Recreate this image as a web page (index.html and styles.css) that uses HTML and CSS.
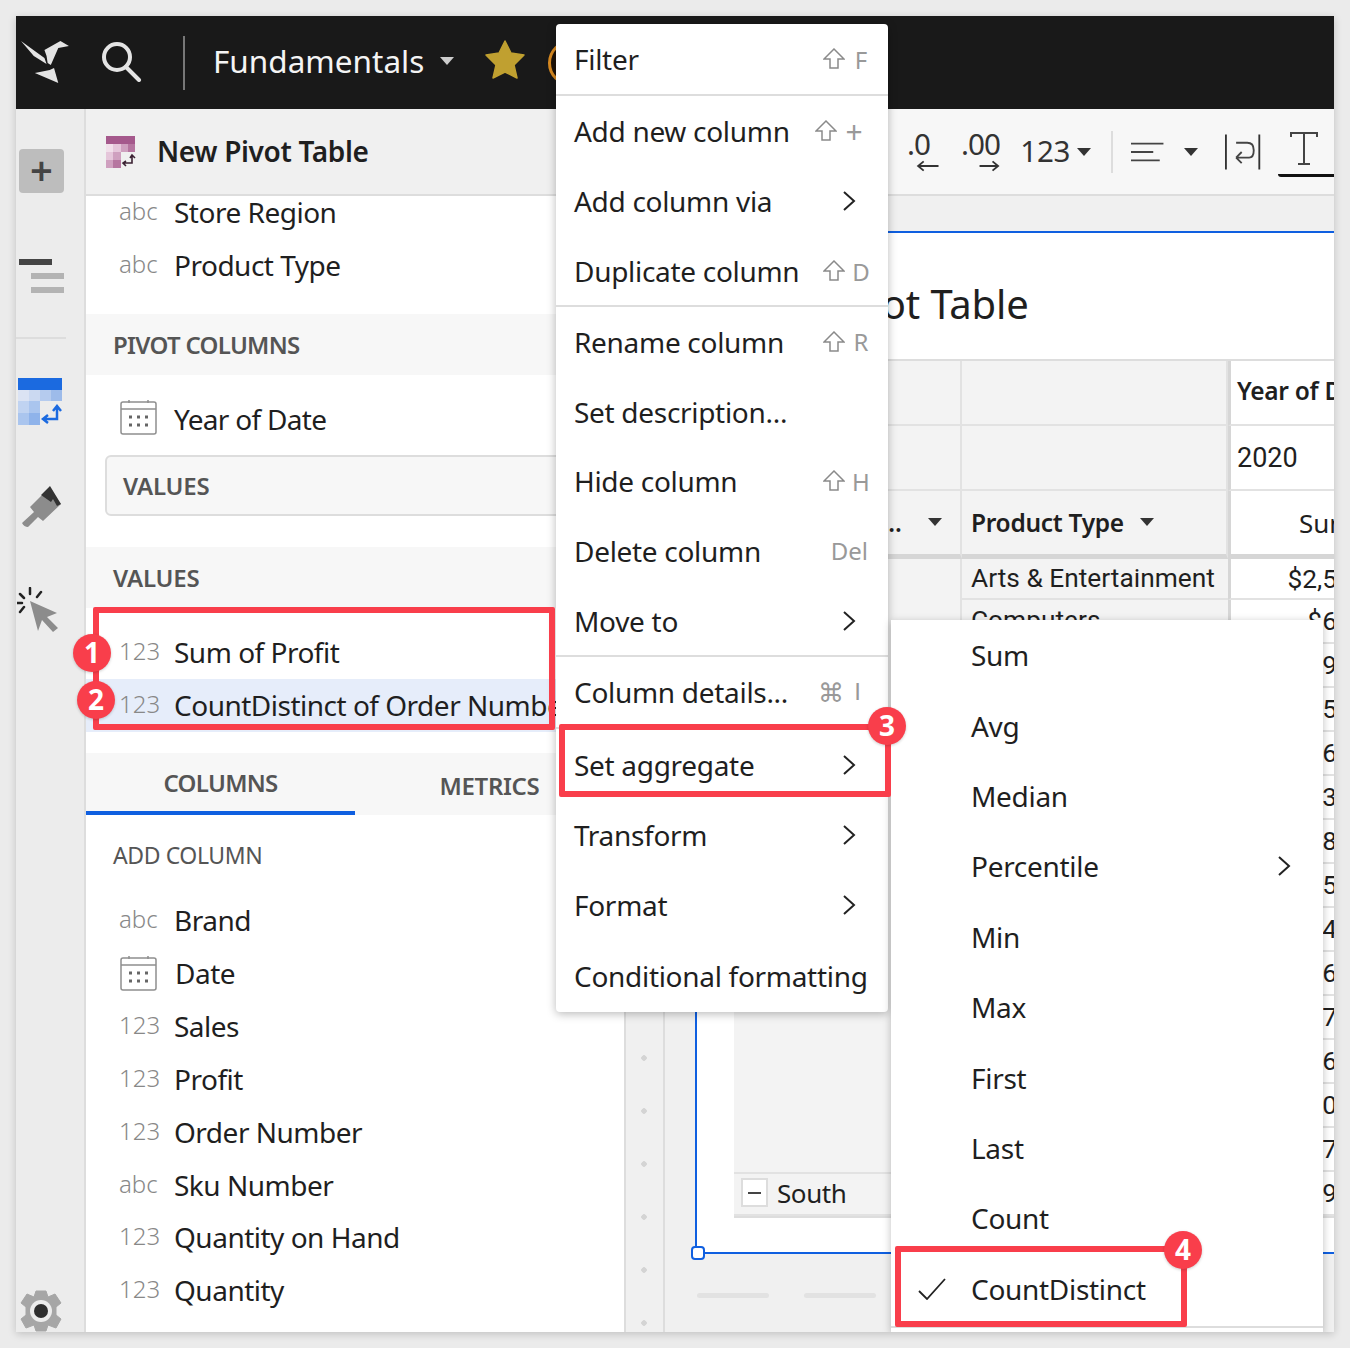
FILE: index.html
```html
<!DOCTYPE html>
<html>
<head>
	<meta charset="utf-8">
	<title>Fundamentals</title>
	<link rel="stylesheet" href="styles.css">
</head>
<body>
<div class="app">
	<header class="topbar">
		<svg class="logo" width="49" height="44" viewBox="0 0 46 44" preserveAspectRatio="none"><path d="M0 1 L22 18 L24 24 L12 16Z M22 10 L37 1 L45 6 L35 8 L28 25 L25 23 L24 16Z M13 33 L27 30 L31 28 L35 43Z" fill="#e4e4e4"/></svg>
		<svg class="search" width="42" height="42" viewBox="0 0 42 42"><circle cx="17" cy="17" r="13" fill="none" stroke="#e4e4e4" stroke-width="4"/><path d="M26 27 L39 40" stroke="#e4e4e4" stroke-width="4" stroke-linecap="round"/></svg>
		<div class="topbar-sep"></div>
		<div class="wb-name">Fundamentals</div>
		<div class="caret caret-light"></div>
		<svg class="star" width="42" height="42" viewBox="0 0 42 42"><path d="M21 2 L27 14 L40 16 L30 26 L33 39 L21 33 L9 39 L12 26 L2 16 L15 14Z" fill="#c0a030" stroke="#c0a030" stroke-linejoin="round" stroke-width="1.5"/></svg>
		<div class="avatar"></div>
	</header>

	<div class="main">
		<nav class="rail">
			<div class="rail-add">+</div>
			<div class="rail-list"><span class="bar-dark"></span><span class="bar-light"></span><span class="bar-light"></span></div>
			<div class="rail-sep"></div>
			<svg class="rail-pivot" width="48" height="47" viewBox="0 0 48 47">
				<rect width="44" height="12" x="1" y="0" fill="#1b6ae0"/>
				<rect x="1" y="12" width="11" height="11" fill="#dbe3f3"/><rect x="12" y="12" width="11" height="11" fill="#cbd9f1"/><rect x="23" y="12" width="11" height="11" fill="#b5cbee"/><rect x="34" y="12" width="11" height="11" fill="#9dbbea"/>
				<rect x="1" y="23" width="11" height="12" fill="#c0d3f1"/><rect x="12" y="23" width="11" height="12" fill="#aac5ee"/>
				<rect x="1" y="35" width="11" height="12" fill="#aac5ee"/><rect x="12" y="35" width="11" height="12" fill="#8fb3ea"/>
				<path d="M27 41 H40 V30 M36 33 L40 28 L44 33 M31 37 L26 41 L31 45" fill="none" stroke="#1b6ae0" stroke-width="2.5"/>
			</svg>
			<svg class="rail-brush" width="42" height="42" viewBox="0 0 42 42">
				<path d="M7 41 Q3 41 1 37 L13 26 L9 21 L26 4 L40 18 L22 35 L17 31Z" fill="#8c8c8c"/>
				<path d="M20 9 L29 0 L40 18 L36 20 L32 13 L30 16Z" fill="#333"/>
			</svg>
			<svg class="rail-cursor" width="46" height="46" viewBox="0 0 46 46">
				<path d="M13 14 L40 26 L30 30 L41 41 L36 45 L25 33 L21 44Z" fill="#8c8c8c"/>
				<path d="M13 1 V7 M3 7 L7 11 M24 5 L20 10 M0 16 H5 M7 20 L3 25" stroke="#222" stroke-width="2.5" stroke-linecap="round"/>
			</svg>
			<svg class="rail-gear" width="42" height="42" viewBox="0 0 42 42">
				<path d="M16 1 H26 L28 7 L35 4 L41 13 L36 17 V25 L41 29 L36 38 L28 35 L26 41 H16 L14 35 L6 38 L1 29 L6 25 V17 L1 13 L7 4 L14 7Z" fill="#a6a6a6" stroke="#a6a6a6" stroke-linejoin="round" stroke-width="1"/>
				<circle cx="21" cy="21" r="11" fill="#ececec"/><circle cx="21" cy="21" r="7" fill="#2e2e2e"/>
			</svg>
		</nav>

		<aside class="panel">
			<div class="panel-head">
				<svg width="32" height="32" viewBox="0 0 32 32">
					<rect x="1" y="0" width="29" height="8" fill="#a5598c"/>
					<rect x="1" y="8" width="7" height="8" fill="#f1dfea"/><rect x="8" y="8" width="8" height="8" fill="#e5c6da"/><rect x="16" y="8" width="7" height="8" fill="#cfa0bf"/><rect x="23" y="8" width="7" height="8" fill="#b676a0"/>
					<rect x="1" y="16" width="7" height="8" fill="#e5c6da"/><rect x="8" y="16" width="8" height="8" fill="#cfa0bf"/>
					<rect x="1" y="24" width="7" height="8" fill="#cfa0bf"/><rect x="8" y="24" width="8" height="8" fill="#b676a0"/>
					<path d="M18 27 H27 V20 M25 22 L27 19 L30 22 M21 25 L18 27 L21 30" fill="none" stroke="#3b2233" stroke-width="1.6"/>
				</svg>
				<span class="panel-title">New Pivot Table</span>
			</div>

			<div class="rows-clip">
				<div class="field"><span class="type">abc</span>Store Region</div>
				<div class="field"><span class="type">abc</span>Product Type</div>
			</div>

			<div class="sec-head">PIVOT COLUMNS</div>
			<div class="pivot-body">
				<div class="field field-date">
					<svg class="cal" width="38" height="36" viewBox="0 0 38 36"><rect x="1" y="3" width="35" height="32" rx="2" fill="none" stroke="#8f8f8f" stroke-width="1.5"/><path d="M1 10 H36 M9 1 V4 M28 1 V4" stroke="#8f8f8f" stroke-width="1.5"/><path d="M9 18 h3 M17 18 h3 M25 18 h3 M9 26 h3 M17 26 h3 M25 26 h3" stroke="#666" stroke-width="3"/></svg>
					Year of Date
				</div>
				<div class="drop-box">VALUES</div>
			</div>

			<div class="sec-head sec-values">VALUES</div>
			<div class="values-body">
				<div class="field"><span class="type">123</span>Sum of Profit</div>
				<div class="field field-on"><span class="type">123</span>CountDistinct of Order Number</div>
			</div>

			<div class="tabs">
				<div class="tab tab-on">COLUMNS</div>
				<div class="tab">METRICS</div>
			</div>

			<div class="add-head">ADD COLUMN</div>
			<div class="add-list">
				<div class="field"><span class="type">abc</span>Brand</div>
				<div class="field"><svg class="cal" width="38" height="36" viewBox="0 0 38 36"><rect x="1" y="3" width="35" height="32" rx="2" fill="none" stroke="#8f8f8f" stroke-width="1.5"/><path d="M1 10 H36 M9 1 V4 M28 1 V4" stroke="#8f8f8f" stroke-width="1.5"/><path d="M9 18 h3 M17 18 h3 M25 18 h3 M9 26 h3 M17 26 h3 M25 26 h3" stroke="#666" stroke-width="3"/></svg>Date</div>
				<div class="field"><span class="type">123</span>Sales</div>
				<div class="field"><span class="type">123</span>Profit</div>
				<div class="field"><span class="type">123</span>Order Number</div>
				<div class="field"><span class="type">abc</span>Sku Number</div>
				<div class="field"><span class="type">123</span>Quantity on Hand</div>
				<div class="field"><span class="type">123</span>Quantity</div>
			</div>
		</aside>

		<section class="canvas">
			<div class="toolbar">
				<svg class="tb-dec" width="36" height="44" viewBox="0 0 36 44"><text x="0" y="24" class="tb-num">.0</text><path d="M34 36 H13 M18 31 L12 36 L18 41" fill="none" stroke="#333" stroke-width="2"/></svg>
				<svg class="tb-inc" width="42" height="44" viewBox="0 0 42 44"><text x="0" y="24" class="tb-num">.00</text><path d="M20 36 H39 M34 31 L40 36 L34 41" fill="none" stroke="#333" stroke-width="2"/></svg>
				<span class="tb-123">123</span>
				<div class="caret caret-dark"></div>
				<div class="tb-sep"></div>
				<svg class="tb-align" width="36" height="22" viewBox="0 0 36 22"><path d="M0 2 H35 M0 11 H24 M0 20 H31" stroke="#444" stroke-width="2"/></svg>
				<div class="caret caret-dark caret-align"></div>
				<svg class="tb-wrap" width="38" height="40" viewBox="0 0 38 40"><path d="M1 1 V39 M37 1 V39" stroke="#333" stroke-width="2"/><path d="M26 26 H12 M26 26 Q31 26 31 18 Q31 10 24 10 H12 M12 26 L18 20 M12 26 L18 32" fill="none" stroke="#444" stroke-width="2"/></svg>
				<div class="tb-font">
					<svg width="28" height="36" viewBox="0 0 28 36"><path d="M1 6 V2 H27 V6 M14 2 V33 M8 33 H20" fill="none" stroke="#444" stroke-width="2"/></svg>
				</div>
			</div>
			<div class="canvas-body">
				<div class="dots"></div>
				<div class="work">
					<div class="element">
						<h2 class="el-title">New Pivot Table</h2>
						<div class="pivot">
							<div class="cell hd"></div><div class="cell hd"></div><div class="cell val hd-val bold hd-year">Year of Date</div>
							<div class="cell hd"></div><div class="cell hd"></div><div class="cell val hd-val num">2020</div>
							<div class="cell hd bold hd-store"><span class="clip">Store Region</span><span class="caret caret-dark caret-col"></span></div>
							<div class="cell hd bold hd-prod">Product Type<span class="caret caret-dark caret-col"></span></div>
							<div class="cell val hd-val hd-sum">Sum of Profit</div>
							<div class="cell region"></div>
							<div class="cell prod">Arts &amp; Entertainment</div><div class="cell val money">$2,562,417</div>
							<div class="cell prod">Computers</div><div class="cell val money">$617,308</div>
							<div class="cell prod"></div><div class="cell val money">$942,106</div>
							<div class="cell prod"></div><div class="cell val money">$518,240</div>
							<div class="cell prod"></div><div class="cell val money">$633,915</div>
							<div class="cell prod"></div><div class="cell val money">$371,482</div>
							<div class="cell prod"></div><div class="cell val money">$825,670</div>
							<div class="cell prod"></div><div class="cell val money">$504,129</div>
							<div class="cell prod"></div><div class="cell val money">$467,351</div>
							<div class="cell prod"></div><div class="cell val money">$658,204</div>
							<div class="cell prod"></div><div class="cell val money">$719,036</div>
							<div class="cell prod"></div><div class="cell val money">$602,847</div>
							<div class="cell prod"></div><div class="cell val money">$081,593</div>
							<div class="cell prod"></div><div class="cell val money">$795,260</div>
							<div class="cell sub"><span class="minus"></span>South</div><div class="cell prod"></div><div class="cell val money">$913,774</div>
						</div>
					</div>
					<div class="sheet-bars"><span></span><span></span></div>
					<div class="handle"></div>
				</div>
			</div>
		</section>
	</div>

	<div class="menu">
		<div class="mi">Filter<span class="keys"><svg class="shift" width="22" height="22" viewBox="0 0 22 22"><path d="M11 1 L21 11 H15 V20 H7 V11 H1Z" fill="none" stroke="#8a8a8a" stroke-width="1.5"/></svg><span class="key">F</span></span></div>
		<div class="mline"></div>
		<div class="mi">Add new column<span class="keys keys-wide"><svg class="shift" width="22" height="22" viewBox="0 0 22 22"><path d="M11 1 L21 11 H15 V20 H7 V11 H1Z" fill="none" stroke="#8a8a8a" stroke-width="1.5"/></svg><span class="key key-plus">+</span></span></div>
		<div class="mi">Add column via<svg class="chev" width="14" height="22" viewBox="0 0 14 22"><path d="M2 2 L12 11 L2 20" fill="none" stroke="#222" stroke-width="2"/></svg></div>
		<div class="mi">Duplicate column<span class="keys"><svg class="shift" width="22" height="22" viewBox="0 0 22 22"><path d="M11 1 L21 11 H15 V20 H7 V11 H1Z" fill="none" stroke="#8a8a8a" stroke-width="1.5"/></svg><span class="key">D</span></span></div>
		<div class="mline mline-tight"></div>
		<div class="mi mi-tight">Rename column<span class="keys"><svg class="shift" width="22" height="22" viewBox="0 0 22 22"><path d="M11 1 L21 11 H15 V20 H7 V11 H1Z" fill="none" stroke="#8a8a8a" stroke-width="1.5"/></svg><span class="key">R</span></span></div>
		<div class="mi mi-tight">Set description...</div>
		<div class="mi mi-tight">Hide column<span class="keys"><svg class="shift" width="22" height="22" viewBox="0 0 22 22"><path d="M11 1 L21 11 H15 V20 H7 V11 H1Z" fill="none" stroke="#8a8a8a" stroke-width="1.5"/></svg><span class="key">H</span></span></div>
		<div class="mi mi-tight">Delete column<span class="keys"><span class="key">Del</span></span></div>
		<div class="mi mi-tight">Move to<svg class="chev" width="14" height="22" viewBox="0 0 14 22"><path d="M2 2 L12 11 L2 20" fill="none" stroke="#222" stroke-width="2"/></svg></div>
		<div class="mline"></div>
		<div class="mi mi-tight">Column details...<span class="keys"><span class="key key-cmd">⌘</span><span class="key key-i">I</span></span></div>
		<div class="mline mline-agg"></div>
		<div class="mi mi-wide">Set aggregate<svg class="chev" width="14" height="22" viewBox="0 0 14 22"><path d="M2 2 L12 11 L2 20" fill="none" stroke="#222" stroke-width="2"/></svg></div>
		<div class="mi mi-wide">Transform<svg class="chev" width="14" height="22" viewBox="0 0 14 22"><path d="M2 2 L12 11 L2 20" fill="none" stroke="#222" stroke-width="2"/></svg></div>
		<div class="mi mi-wide">Format<svg class="chev" width="14" height="22" viewBox="0 0 14 22"><path d="M2 2 L12 11 L2 20" fill="none" stroke="#222" stroke-width="2"/></svg></div>
		<div class="mi mi-wide">Conditional formatting</div>
	</div>

	<div class="submenu">
		<div class="si">Sum</div>
		<div class="si">Avg</div>
		<div class="si">Median</div>
		<div class="si">Percentile<svg class="chev" width="14" height="22" viewBox="0 0 14 22"><path d="M2 2 L12 11 L2 20" fill="none" stroke="#222" stroke-width="2"/></svg></div>
		<div class="si">Min</div>
		<div class="si">Max</div>
		<div class="si">First</div>
		<div class="si">Last</div>
		<div class="si">Count</div>
		<div class="si"><svg class="check" width="30" height="22" viewBox="0 0 30 22"><path d="M2 13 L10 21 L28 1" fill="none" stroke="#222" stroke-width="1.8"/></svg>CountDistinct</div>
	</div>

	<div class="mark mark-values"></div>
	<div class="mark mark-agg"></div>
	<div class="mark mark-count"></div>
	<div class="badge badge-1">1</div>
	<div class="badge badge-2">2</div>
	<div class="badge badge-3">3</div>
	<div class="badge badge-4">4</div>
</div>
</body>
</html>
```

FILE: styles.css
```css
body {
	margin: 0;
	background: #ebebeb;
	font-family: "Noto Sans", sans-serif;
	color: #1f1f1f;
}
.app {
	position: relative;
	width: 1318px;
	height: 1316px;
	margin: 16px;
	overflow: hidden;
	background: #fff;
	box-shadow: 0 2px 8px rgba(0,0,0,.18);
}

/* top bar */
.topbar {
	height: 93px;
	background: #191919;
	display: flex;
	align-items: center;
	color: #f4f4f4;
}
.logo { margin-left: 5px; margin-top: -1px; }
.search { margin-left: 30px; margin-top: -4px; }
.topbar-sep { width: 2px; height: 54px; background: #777; margin-left: 41px; }
.wb-name { font-size: 31.5px; margin-left: 28px; margin-top: -4px; }
.caret {
	width: 0;
	height: 0;
	border-left: 7px solid transparent;
	border-right: 7px solid transparent;
	border-top: 8px solid #333;
}
.caret-light { border-top-color: #ccc; margin-left: 16px; margin-top: -4px; }
.star { margin-left: 30px; margin-top: -6px; }
.avatar {
	width: 40px;
	height: 40px;
	border-radius: 50%;
	background: #1e1208;
	border: 3px solid #d98a20;
	margin-left: 22px;
}

.main { display: flex; height: 1223px; }

/* left rail */
.rail {
	width: 68px;
	background: #ececec;
	border-right: 2px solid #ddd;
	display: flex;
	flex-direction: column;
	flex-shrink: 0;
}
.rail-add {
	width: 45px;
	height: 44px;
	margin: 40px 0 0 3px;
	border-radius: 4px;
	background: #bdbdbd;
	color: #444;
	font-size: 40px;
	font-weight: 600;
	line-height: 42px;
	text-align: center;
}
.rail-list { margin: 66px 0 0 3px; width: 46px; }
.rail-list span { display: block; height: 6px; margin-bottom: 8px; }
.bar-dark { background: #444; width: 33px; }
.bar-light { background: #b3b3b3; width: 33px; margin-left: 12px; }
.rail-sep { height: 2px; background: #ddd; width: 50px; margin-top: 36px; }
.rail-pivot { margin: 39px 0 0 1px; }
.rail-brush { margin: 61px 0 0 5px; }
.rail-cursor { margin: 59px 0 0 1px; }
.rail-gear { margin-top: auto; margin-left: 4px; margin-bottom: 0; }

/* data panel */
.panel {
	width: 538px;
	flex-shrink: 0;
	background: #fff;
	border-right: 2px solid #ddd;
	overflow: hidden;
}
.panel-head {
	height: 85px;
	background: #f0f0f0;
	border-bottom: 2px solid #ddd;
	display: flex;
	align-items: center;
	padding-left: 19px;
}
.panel-title { font-size: 28px; font-weight: 600; margin-left: 20px; letter-spacing: -.35px; margin-top: -1px; }
.rows-clip { height: 118px; overflow: hidden; }
.rows-clip .field:first-child { margin-top: -10px; }
.field {
	display: flex;
	align-items: center;
	box-sizing: border-box;
	height: 53px;
	padding: 0 0 2px 33px;
	font-size: 28px;
	letter-spacing: -.5px;
	white-space: nowrap;
}
.type {
	width: 55px;
	font-size: 24px;
	letter-spacing: 0;
	color: #888;
	font-weight: 300;
	margin-top: -3px;
	flex-shrink: 0;
}
.cal { margin-right: 17px; margin-left: 1px; flex-shrink: 0; }
.sec-head {
	height: 61px;
	line-height: 61px;
	padding-left: 27px;
	background: #f7f7f7;
	font-size: 24px;
	font-weight: 600;
	letter-spacing: -.7px;
	color: #555;
}
.sec-values { letter-spacing: -.2px; }
.pivot-body { height: 172px; }
.field-date { height: 90px; letter-spacing: -.7px; }
.field-date .cal { margin-top: -4px; margin-right: 16px; }
.drop-box {
	height: 57px;
	line-height: 57px;
	margin: -10px -20px 0 19px;
	padding-left: 16px;
	background: #f7f7f7;
	border: 2px solid #ddd;
	border-radius: 6px;
	font-size: 24px;
	font-weight: 600;
	letter-spacing: -.2px;
	color: #555;
}
.values-body { padding-top: 18px; height: 145px; box-sizing: border-box; }
.field-on { background: #e6edfa; }
.tabs { display: flex; height: 62px; background: #f7f7f7; }
.tab {
	width: 270px;
	box-sizing: border-box;
	text-align: center;
	line-height: 66px;
	font-size: 24px;
	font-weight: 600;
	letter-spacing: -.3px;
	color: #555;
}
.tab-on { border-bottom: 4px solid #0f5fe0; line-height: 60px; letter-spacing: -.7px; }
.add-head {
	height: 80px;
	line-height: 80px;
	padding-left: 27px;
	font-size: 23px;
	letter-spacing: -.4px;
	color: #555;
}
.add-list .field { height: 52.85px; }

/* canvas side */
.canvas { flex: 1; min-width: 0; background: #f0f0f0; display: flex; flex-direction: column; }
.toolbar {
	height: 85px;
	flex-shrink: 0;
	background: #f7f7f7;
	border-bottom: 2px solid #ddd;
	display: flex;
	align-items: center;
	padding-left: 281px;
	white-space: nowrap;
}
.tb-num { font-size: 32px; fill: #333; font-family: "Noto Sans", sans-serif; letter-spacing: -1px; }
.tb-dec { margin-top: 2px; }
.tb-inc { margin-left: 21px; margin-top: 2px; }
.tb-123 { font-size: 29.5px; letter-spacing: -.3px; margin-left: 20px; color: #333; margin-top: -2px; }
.caret-dark { margin-left: 7px; }
.tb-sep { width: 2px; height: 42px; background: #ddd; margin-left: 20px; }
.tb-align { margin-left: 18px; }
.caret-align { margin-left: 20px; }
.tb-wrap { margin-left: 27px; }
.tb-font {
	margin-left: 17px;
	width: 60px;
	height: 46px;
	padding-left: 12px;
	box-sizing: border-box;
	border-bottom: 3px solid #111;
	border-radius: 0 0 0 3px;
	margin-top: 5px;
}
.canvas-body { flex: 1; display: flex; min-height: 0; }
.dots {
	width: 37px;
	flex-shrink: 0;
	border-right: 2px solid #ddd;
	background: radial-gradient(circle at 18px 26px, #d4d4d4 2.5px, transparent 3px) 0 41px / 100% 53px;
}
.work { position: relative; flex: 1; min-width: 0; padding: 35px 0 0 30px; }
.element {
	height: 1023px;
	box-sizing: border-box;
	background: #fff;
	border: 2px solid #0f5fe0;
	border-right: 0;
	padding-left: 37px;
	white-space: nowrap;
}
.el-title {
	margin: 0;
	height: 127px;
	line-height: 142px;
	font-size: 40px;
	font-weight: 400;
	letter-spacing: -.15px;
}
.pivot {
	display: grid;
	grid-template-columns: 228px 266px 198px;
	grid-template-rows: 65px 65px 68px 41px repeat(14, 44px);
	border-top: 2px solid #ddd;
	border-bottom: 2px solid #ddd;
	margin-top: -1px;
	font-size: 26px;
}
.cell {
	display: flex;
	align-items: center;
	box-sizing: border-box;
	border-bottom: 2px solid #e2e2e2;
	padding-left: 10px;
	overflow: hidden;
}
.hd { background: #f3f3f3; border-right: 2px solid #e2e2e2; }
.bold { font-weight: 600; font-size: 24.5px; letter-spacing: -.3px; }
.val { background: #fff; border-left: 3px solid #d6d6d6; padding-left: 6px; }
.hd-year { padding-bottom: 4px; }
.num { font-family: Roboto, sans-serif; font-size: 27px; }
.hd-store { border-bottom: 5px solid #d6d6d6; justify-content: flex-end; padding-right: 18px; }
.clip { width: 96px; overflow: hidden; text-overflow: ellipsis; white-space: nowrap; margin-right: 2px; }
.hd-prod, .hd-sum { border-bottom: 5px solid #d6d6d6; }
.hd-prod { padding-left: 9px; }
.caret-col { margin-left: 16px; margin-top: -2px; flex-shrink: 0; }
.hd-sum { padding-left: 68px; }
.region { grid-row: 4 / span 14; grid-column: 1; background: #f3f3f3; border-bottom: 0; border-right: 2px solid #e2e2e2; }
.prod {
	grid-column: 2;
	background: #f3f3f3;
	font-family: Roboto, sans-serif;
	font-size: 26.3px;
	padding: 0 0 2px 9px;
}
.money {
	grid-column: 3;
	font-family: Roboto, sans-serif;
	justify-content: flex-end;
	padding-right: 10px;
	font-size: 26.3px;
}
.sub { grid-column: 1; background: #f3f3f3; border-top: 2px solid #e2e2e2; padding: 0 0 3px 7px; font-size: 26px; letter-spacing: -.4px; }
.minus {
	display: block;
	width: 27px;
	height: 29px;
	box-sizing: border-box;
	border: 2px solid #ddd;
	background: linear-gradient(#444,#444) center / 13px 2px no-repeat #fff;
	margin-right: 9px;
}
.sheet-bars { display: flex; gap: 35px; margin: 39px 0 0 2px; }
.sheet-bars span { width: 72px; height: 5px; border-radius: 3px; background: #e2e2e2; }
.handle {
	position: absolute;
	left: 26px;
	top: 1050px;
	width: 14px;
	height: 14px;
	box-sizing: border-box;
	background: #fff;
	border: 2px solid #0f5fe0;
	border-radius: 4px;
}

/* menus */
.menu {
	position: absolute;
	left: 540px;
	top: 8px;
	width: 332px;
	padding-bottom: 1px;
	background: #fff;
	border-radius: 4px;
	box-shadow: 0 2px 10px rgba(0,0,0,.28);
}
.mi, .si {
	height: 70px;
	display: flex;
	align-items: center;
	justify-content: space-between;
	padding: 0 20px 0 18px;
	font-size: 28px;
	letter-spacing: -.3px;
	white-space: nowrap;
}
.mi-tight { height: 69.7px; }
.mi-wide { height: 70.3px; }
.mline { height: 2px; background: #ddd; }
.mline-tight { margin-top: -1px; }
.mline-agg { margin-bottom: .5px; }
.keys { display: flex; align-items: center; color: #999; }
.key { font-size: 24px; letter-spacing: 0; }
.shift + .key { width: 20px; margin: 0 -3px 0 6px; text-align: center; }
.shift + .key-plus { font-size: 30px; margin: 0 0 0 7px; }
.key-cmd { font-size: 26px; margin-right: 10px; }
.key-i { font-family: "Liberation Sans", sans-serif; padding-right: 7px; }
.keys-wide { margin-right: 4px; }
.chev { margin-right: 12px; }
.submenu {
	position: absolute;
	left: 875px;
	top: 604px;
	width: 432px;
	height: 712px;
	box-sizing: border-box;
	background: #fff;
	box-shadow: 0 2px 8px rgba(0,0,0,.25);
}
.submenu .si { padding-left: 80px; height: 70.4px; position: relative; }
.check { position: absolute; left: 26px; top: 24px; }
.submenu::after { content: ""; display: block; height: 2px; background: #ddd; margin-top: 2px; }

/* tutorial marks */
.mark { position: absolute; box-sizing: border-box; border: 6px solid #f93e4b; border-radius: 2px; }
.mark-values { left: 77px; top: 591px; width: 462px; height: 123px; }
.mark-agg { left: 543px; top: 708px; width: 332px; height: 73px; }
.mark-count { left: 879px; top: 1230px; width: 292px; height: 81px; }
.badge {
	position: absolute;
	width: 38px;
	height: 38px;
	border-radius: 50%;
	background: #f93e4b;
	color: #fff;
	font-size: 28px;
	font-weight: 700;
	text-align: center;
	line-height: 37px;
	box-shadow: 0 1px 3px rgba(0,0,0,.2);
}
.badge-1 { left: 57px; top: 618px; }
.badge-2 { left: 61px; top: 665px; }
.badge-3 { left: 852px; top: 691px; }
.badge-4 { left: 1148px; top: 1215px; }
```
